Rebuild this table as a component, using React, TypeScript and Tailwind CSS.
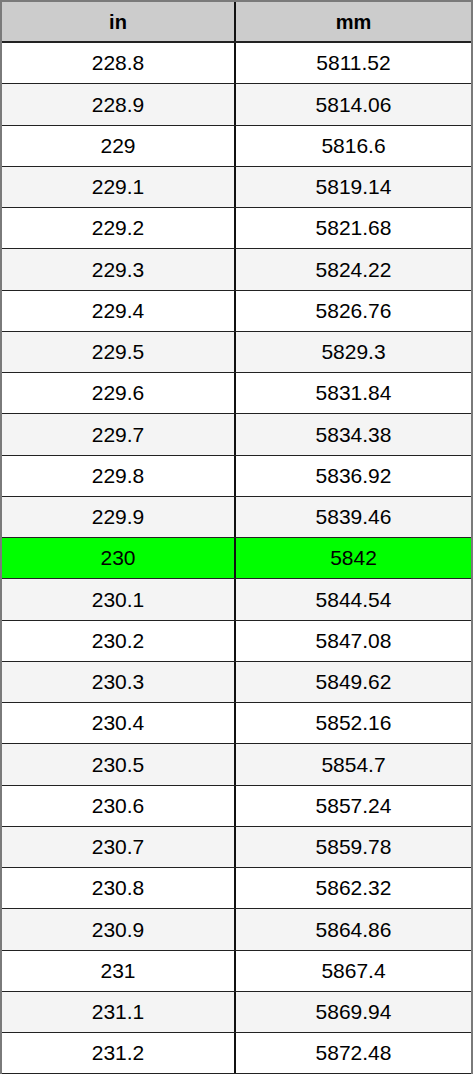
import React from 'react';

const rows: [string, string][] = [
  ['228.8', '5811.52'],
  ['228.9', '5814.06'],
  ['229', '5816.6'],
  ['229.1', '5819.14'],
  ['229.2', '5821.68'],
  ['229.3', '5824.22'],
  ['229.4', '5826.76'],
  ['229.5', '5829.3'],
  ['229.6', '5831.84'],
  ['229.7', '5834.38'],
  ['229.8', '5836.92'],
  ['229.9', '5839.46'],
  ['230', '5842'],
  ['230.1', '5844.54'],
  ['230.2', '5847.08'],
  ['230.3', '5849.62'],
  ['230.4', '5852.16'],
  ['230.5', '5854.7'],
  ['230.6', '5857.24'],
  ['230.7', '5859.78'],
  ['230.8', '5862.32'],
  ['230.9', '5864.86'],
  ['231', '5867.4'],
  ['231.1', '5869.94'],
  ['231.2', '5872.48'],
];

export default function App() {
  return (
    <div className="w-[474px] h-[1077px] bg-white font-['Liberation_Sans',Arial,sans-serif] text-black">
      <div className="w-[473px] border-t-2 border-l-2 border-r-2 border-[#7a7a7a]">
        <div className="grid grid-cols-[232px_2px_1fr] h-[41px] bg-[#cccccc] border-b-2 border-[#222]">
          <div className="flex items-center justify-center text-[20px] font-bold">in</div>
          <div className="bg-[#111]" />
          <div className="flex items-center justify-center text-[20px] font-bold">mm</div>
        </div>
        {rows.map(([a, b], i) => {
          const bg = a === '230' ? 'bg-[#00ff00]' : i % 2 === 1 ? 'bg-[#f4f4f4]' : 'bg-white';
          return (
            <div key={a} className={`grid grid-cols-[232px_2px_1fr] h-[41.25px] border-b border-[#222] ${bg}`}>
              <div className="flex items-center justify-center text-[21px]">{a}</div>
              <div className="bg-[#111]" />
              <div className="flex items-center justify-center text-[21px]">{b}</div>
            </div>
          );
        })}
      </div>
    </div>
  );
}
